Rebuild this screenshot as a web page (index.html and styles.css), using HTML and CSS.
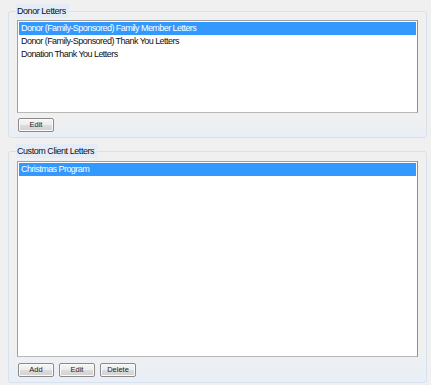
FILE: index.html
```html
<!DOCTYPE html>
<html>
<head>
<meta charset="utf-8">
<link rel="stylesheet" href="styles.css">
</head>
<body>
<fieldset class="group group-donor">
  <legend class="group-title">Donor Letters</legend>
  <div class="listbox listbox-donor">
    <div class="item selected">Donor (Family-Sponsored) Family Member Letters</div>
    <div class="item">Donor (Family-Sponsored) Thank You Letters</div>
    <div class="item">Donation Thank You Letters</div>
  </div>
  <div class="buttons">
    <button class="btn">Edit</button>
  </div>
</fieldset>
<fieldset class="group group-custom">
  <legend class="group-title">Custom Client Letters</legend>
  <div class="listbox listbox-custom">
    <div class="item selected">Christmas Program</div>
  </div>
  <div class="buttons">
    <button class="btn">Add</button>
    <button class="btn">Edit</button>
    <button class="btn">Delete</button>
  </div>
</fieldset>
</body>
</html>
```

FILE: styles.css
```css
html, body {
  margin: 0;
  padding: 0;
}
body {
  background: #f0f0f0;
  font-family: "Liberation Sans", Arial, sans-serif;
  font-size: 9px;
  color: #000;
  width: 431px;
  height: 385px;
  overflow: hidden;
}
.group {
  box-sizing: border-box;
  width: 419px;
  margin: 4px 4px 0 8px;
  padding: 2px 8px 5px 8px;
  border: 1px solid #d8e2ee;
  border-radius: 3px;
  background: linear-gradient(to bottom, #f0f0f0 0%, #f0f0f0 85%, #e9eff7 100%);
  min-width: 0;
}
.group-custom {
  margin-top: 6px;
  padding-top: 3px;
  padding-bottom: 5px;
}
.group-title {
  padding: 0 3px 0 1px;
  margin-left: -1px;
  line-height: 14px;
  height: 14px;
  font-size: 9px;
  letter-spacing: -0.45px;
  background: #e4ecf7;
  color: #111;
}
.listbox {
  box-sizing: border-box;
  background: #fff;
  border: 1px solid #a0a0a0;
  border-right-color: #8c8c8c;
  border-bottom-color: #b8b8b8;
  padding: 1px 1px;
}
.listbox-donor {
  height: 93px;
}
.listbox-custom {
  height: 196px;
}
.item {
  height: 13px;
  line-height: 13px;
  padding-left: 2px;
  white-space: nowrap;
  font-size: 9px;
  letter-spacing: -0.55px;
  color: #111;
}
.item.selected {
  background: #3399ff;
  color: #fff;
}
.buttons {
  display: flex;
  gap: 5px;
  margin-top: 5px;
  padding-left: 1px;
}
.group-custom .buttons {
  margin-top: 6px;
}
.btn {
  box-sizing: border-box;
  width: 36px;
  height: 14px;
  padding: 0;
  margin: 0;
  border: 1px solid #8a8a8a;
  border-radius: 2px;
  background: linear-gradient(to bottom, #f6f6f6 0%, #ececec 50%, #dcdcdc 51%, #d2d2d2 100%);
  box-shadow: inset 0 0 0 1px #fbfbfb;
  font-family: "Liberation Sans", Arial, sans-serif;
  font-size: 7.5px;
  line-height: 12px;
  color: #222;
  text-align: center;
}
```
